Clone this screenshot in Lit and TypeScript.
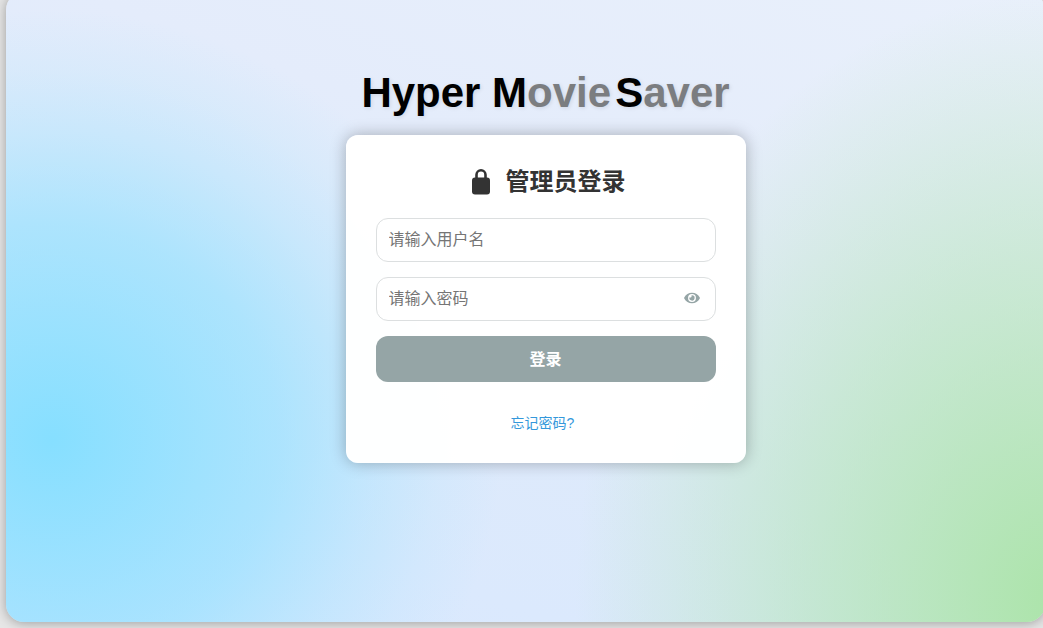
import { LitElement, html, css } from "lit";
import { customElement, state } from "lit/decorators.js";

@customElement("app-root")
export class AppRoot extends LitElement {
  @state() private reveal = false;

  static styles = css`
    :host {
      display: flex;
      box-sizing: border-box;
      height: 100vh;
      overflow: hidden;
      background: #e6e6e6;
      font-family: "Liberation Sans", Arial, "Noto Sans CJK SC", sans-serif;
    }
    * {
      box-sizing: border-box;
    }
    .window {
      flex: 1;
      display: flex;
      flex-direction: column;
      align-items: center;
      margin: -8px -2px 6px 6px;
      padding: 76px 0 40px 40px;
      border-radius: 18px;
      box-shadow: 0 1px 12px rgba(0, 0, 0, 0.32);
      background:
        radial-gradient(ellipse 450px 430px at 46px 448px, rgba(134, 223, 255, 1) 0%, rgba(134, 223, 255, 0.56) 50%, rgba(134, 223, 255, 0.26) 72%, rgba(134, 223, 255, 0.1) 86%, rgba(134, 223, 255, 0) 100%),
        radial-gradient(ellipse 480px 610px at 101% 97%, rgba(172, 228, 170, 1) 0%, rgba(172, 228, 170, 0.46) 55%, rgba(172, 228, 170, 0.18) 82%, rgba(172, 228, 170, 0) 100%),
        linear-gradient(20deg, #d8e8ff 0%, #deeafb 40%, #e4ecfb 65%, #e9f0fb 100%);
    }
    .brand {
      margin: 0 0 18px;
      font-size: 42px;
      line-height: 49px;
      font-weight: 700;
      color: #000;
      white-space: nowrap;
      text-shadow: 1px 1px 4px rgba(0, 0, 0, 0.1);
      display: flex;
      gap: 4px;
    }
    .soft {
      color: #7b7d80;
    }
    .card {
      width: 400px;
      max-width: 100%;
      padding: 30px;
      border-radius: 12px;
      background: rgba(255, 255, 255, 0.98);
      box-shadow: 0 0 16px rgba(0, 0, 0, 0.28);
      display: flex;
      flex-direction: column;
      gap: 15px;
    }
    .heading {
      display: flex;
      align-items: center;
      justify-content: center;
      gap: 16px;
      margin: 0 0 4px;
      padding-left: 6px;
      font-size: 24px;
      line-height: 34px;
      font-weight: 700;
      color: #333;
    }
    .lock {
      width: 18px;
      height: 26px;
    }
    .field {
      position: relative;
      display: flex;
    }
    .input {
      width: 100%;
      height: 44px;
      padding: 0 40px 0 12px;
      border: 1px solid #dcdfe0;
      border-radius: 12px;
      background: #fff;
      font: inherit;
      font-size: 16px;
      color: #333;
      outline-color: #95a5a6;
    }
    .input::placeholder {
      color: #757575;
    }
    .eye {
      position: absolute;
      top: 0;
      right: 8px;
      width: 32px;
      height: 42px;
      padding: 0;
      border: 0;
      background: none;
      color: #95a5a6;
      display: grid;
      place-items: center;
      cursor: pointer;
    }
    .eye svg {
      width: 16px;
      height: 14px;
    }
    .submit {
      height: 46px;
      padding: 0 0 2px;
      border: 0;
      border-radius: 12px;
      background: #95a5a6;
      color: #fff;
      font: inherit;
      font-size: 16px;
      font-weight: 700;
      cursor: pointer;
    }
    .foot {
      padding: 16px 6px 0 0;
      text-align: center;
      font-size: 14px;
      line-height: 20px;
    }
    .link {
      color: #3498db;
      text-decoration: none;
    }
  `;

  private toggle() {
    this.reveal = !this.reveal;
  }

  render() {
    return html`
      <main class="window">
        <h1 class="brand">
          <span>Hyper M<span class="soft">ovie</span></span>
          <span>S<span class="soft">aver</span></span>
        </h1>
        <form class="card" @submit=${(e: Event) => e.preventDefault()}>
          <h2 class="heading">
            <svg class="lock" viewBox="0 0 18 26" aria-hidden="true">
              <path d="M4.5 11V5.8a4.5 4.5 0 0 1 9 0V11" fill="none" stroke="currentColor" stroke-width="2.6" />
              <rect y="8.5" width="18" height="17" rx="3" fill="currentColor" />
            </svg>
            <span>管理员登录</span>
          </h2>
          <label class="field">
            <input class="input" type="text" aria-label="用户名" placeholder="请输入用户名" />
          </label>
          <div class="field">
            <input class="input" type=${this.reveal ? "text" : "password"} aria-label="密码" placeholder="请输入密码" />
            <button class="eye" type="button" aria-label="显示密码" @click=${this.toggle}>
              <svg viewBox="0 0 576 512" fill="currentColor" aria-hidden="true">
                <path d="M572.52 241.4C518.29 135.59 410.93 64 288 64S57.68 135.64 3.48 241.41a32.35 32.35 0 0 0 0 29.19C57.71 376.41 165.07 448 288 448s230.32-71.64 284.52-177.41a32.35 32.35 0 0 0 0-29.19zM288 400a144 144 0 1 1 144-144 143.93 143.93 0 0 1-144 144zm0-240a95.31 95.31 0 0 0-25.31 3.79 47.85 47.85 0 0 1-66.9 66.9A95.78 95.78 0 1 0 288 160z" />
              </svg>
            </button>
          </div>
          <button class="submit" type="submit">登录</button>
          <div class="foot"><a class="link" href="#">忘记密码?</a></div>
        </form>
      </main>
    `;
  }
}
